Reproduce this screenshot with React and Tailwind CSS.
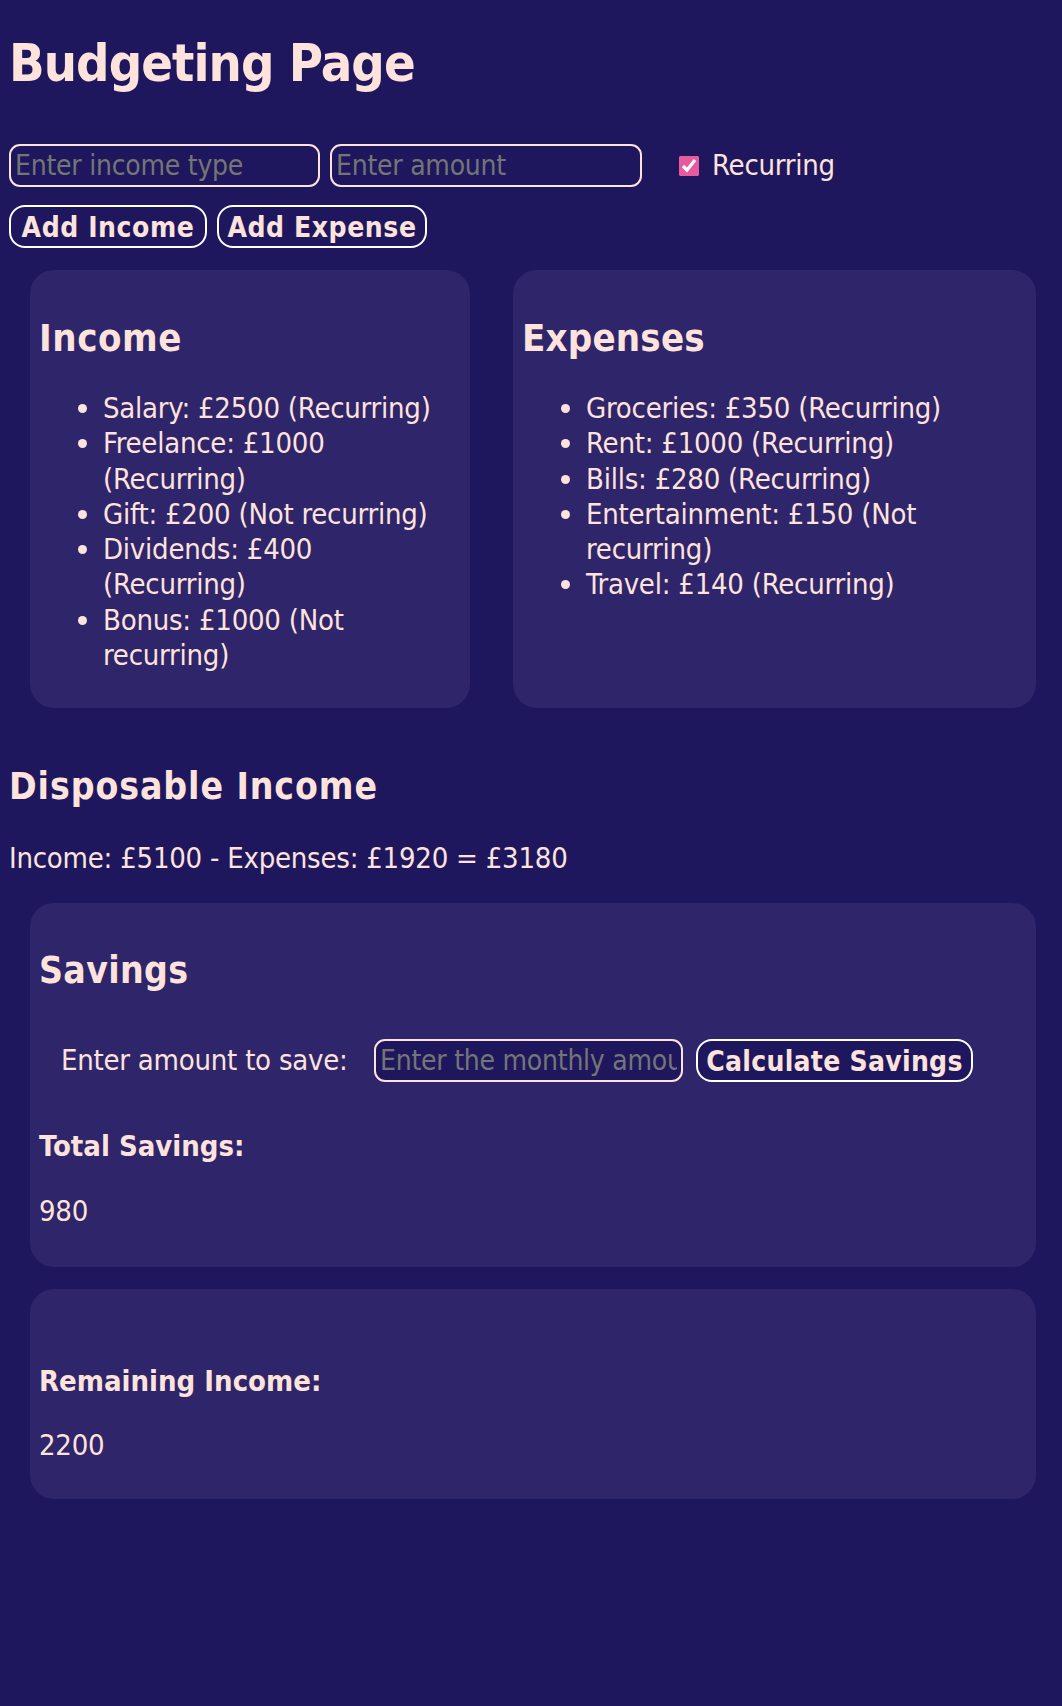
import React from "react";

const incomes = [
  { name: "Salary", amount: 2500, recurring: true },
  { name: "Freelance", amount: 1000, recurring: true },
  { name: "Gift", amount: 200, recurring: false },
  { name: "Dividends", amount: 400, recurring: true },
  { name: "Bonus", amount: 1000, recurring: false },
];

const expenses = [
  { name: "Groceries", amount: 350, recurring: true },
  { name: "Rent", amount: 1000, recurring: true },
  { name: "Bills", amount: 280, recurring: true },
  { name: "Entertainment", amount: 150, recurring: false },
  { name: "Travel", amount: 140, recurring: true },
];

const Entry = ({ item }) => (
  <li>
    {item.name}: £{item.amount} ({item.recurring ? "Recurring" : "Not recurring"})
  </li>
);

const Card = ({ className = "", children }) => (
  <div className={"rounded-[24px] bg-[#2f256a] px-[9px] " + className}>{children}</div>
);

const App = () => {
  const totalIncome = incomes.reduce((sum, i) => sum + i.amount, 0);
  const totalExpenses = expenses.reduce((sum, e) => sum + e.amount, 0);

  return (
    <div className="min-h-screen bg-[#1e175e] text-[#fde3dc] font-['DejaVu_Sans_Condensed','DejaVu_Sans',sans-serif] font-stretch-condensed tracking-[-0.015em] px-[9px] pt-[32px] pb-10">
      <h1 className="text-[52px] leading-[62px] font-bold tracking-[-0.018em]">Budgeting Page</h1>

      {/* entry form */}
      <div className="mt-[50px] flex items-center">
        <input
          className="w-[311px] h-[43px] bg-[#1e175e] border-2 border-[#fde3dc] rounded-[11px] px-[4px] text-[28px] placeholder:text-[#757575] outline-none"
          placeholder="Enter income type"
        />
        <input
          className="ml-[10px] w-[312px] h-[43px] bg-[#1e175e] border-2 border-[#fde3dc] rounded-[11px] px-[4px] text-[28px] placeholder:text-[#757575] outline-none"
          placeholder="Enter amount"
        />
        <label className="ml-[37px] flex items-center gap-[13px] text-[29px] leading-[35px]">
          <input type="checkbox" defaultChecked className="w-5 h-5 m-0 accent-[#e85a9e]" />
          Recurring
        </label>
      </div>
      <div className="mt-[18px] flex gap-[10px]">
        <button className="w-[198px] h-[43px] border-2 border-white rounded-[16px] bg-[#1e175e] text-[28px] font-bold tracking-[0.02em]">
          Add Income
        </button>
        <button className="w-[210px] h-[43px] border-2 border-white rounded-[16px] bg-[#1e175e] text-[28px] font-bold tracking-[0.02em]">
          Add Expense
        </button>
      </div>

      {/* lists */}
      <div className="mt-[22px] ml-[21px] flex gap-[43px]">
        <Card className="w-[440px] pt-[45px] pb-[35px]">
          <h2 className="text-[38px] leading-[46px] font-bold tracking-[0.015em]">Income</h2>
          <ul className="mt-[30px] pl-[64px] list-disc text-[29px] leading-[35.3px]">
            {incomes.map((item) => (
              <Entry key={item.name} item={item} />
            ))}
          </ul>
        </Card>
        <Card className="w-[523px] pt-[45px] pb-[35px]">
          <h2 className="text-[38px] leading-[46px] font-bold tracking-[0.005em]">Expenses</h2>
          <ul className="mt-[30px] pl-[64px] list-disc text-[29px] leading-[35.3px]">
            {expenses.map((item) => (
              <Entry key={item.name} item={item} />
            ))}
          </ul>
        </Card>
      </div>

      <h2 className="mt-[57px] text-[37px] leading-[44px] font-bold tracking-[0.025em]">Disposable Income</h2>
      <p className="mt-[32px] text-[29px] leading-[35px]">
        Income: £{totalIncome} - Expenses: £{totalExpenses} = £{totalIncome - totalExpenses}
      </p>

      <div className="ml-[21px] w-[1006px]">
        <Card className="mt-[27px] pt-[46px] pb-[38px]">
          <h2 className="text-[37px] leading-[44px] font-bold tracking-[0.01em]">Savings</h2>
          <div className="mt-[46px] flex items-center pl-[22px]">
            <label className="w-[313px] text-[29px] leading-[35px]">Enter amount to save:</label>
            <input
              className="w-[309px] h-[43px] bg-[#1e175e] border-2 border-[#fde3dc] rounded-[11px] px-[4px] text-[28px] placeholder:text-[#757575] outline-none"
              placeholder="Enter the monthly amount"
            />
            <button className="ml-[13px] w-[277px] h-[43px] border-2 border-white rounded-[16px] bg-[#1e175e] text-[28px] font-bold tracking-[0.01em]">
              Calculate Savings
            </button>
          </div>
          <h3 className="mt-[47px] text-[29px] leading-[35px] font-bold tracking-normal">Total Savings:</h3>
          <p className="mt-[30px] text-[29px] leading-[35px]">980</p>
        </Card>

        <Card className="mt-[22px] pt-[75px] pb-[36px]">
          <h3 className="text-[29px] leading-[35px] font-bold tracking-normal">Remaining Income:</h3>
          <p className="mt-[29px] text-[29px] leading-[35px]">2200</p>
        </Card>
      </div>
    </div>
  );
};

export default App;
